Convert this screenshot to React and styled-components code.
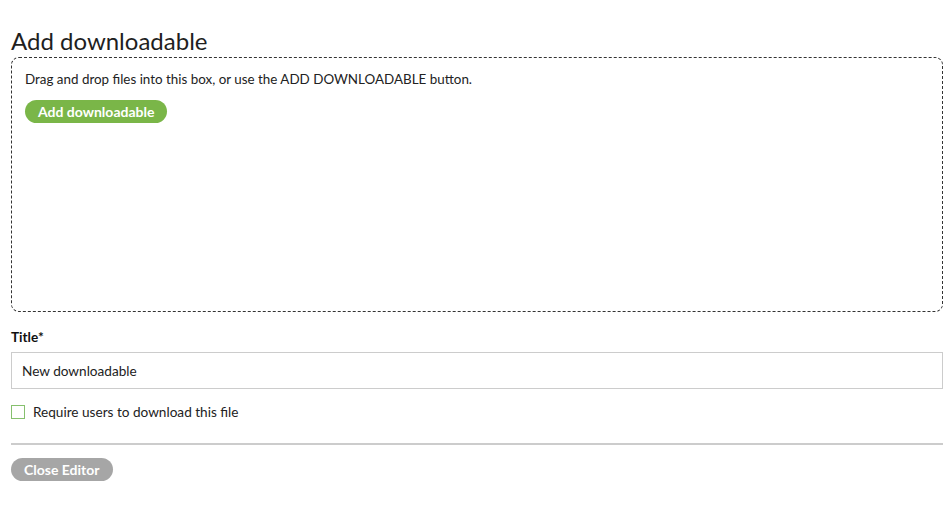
import React from 'react';
import styled, { createGlobalStyle } from 'styled-components';

const GlobalStyle = createGlobalStyle`
  body {
    margin: 0;
    background: #fff;
    font-family: Lato, "Open Sans", sans-serif;
    color: #222;
  }
`;

const Page = styled.div`
  padding: 27px 6px 0 11px;
`;

const Heading = styled.h2`
  margin: 0 0 3px;
  font-size: 24px;
  font-weight: 400;
  line-height: 27px;
  color: #1f1f1f;
`;

const DropZone = styled.div`
  height: 255px;
  box-sizing: border-box;
  border: 1px dashed #333;
  border-radius: 8px;
  padding: 13px 13px;
`;

const Hint = styled.p`
  margin: 0 0 12px;
  font-size: 13.4px;
  line-height: 17px;
`;

const Pill = styled.button`
  display: inline-block;
  border: 0;
  border-radius: 12px;
  height: 23px;
  padding: 0 13px;
  font-family: inherit;
  font-size: 14px;
  font-weight: 700;
  color: #fff;
  background: ${(p) => p.$bg};
  cursor: pointer;
`;

const Label = styled.label`
  display: block;
  margin: 17px 0 7px;
  font-size: 13.6px;
  font-weight: 700;
  color: #111;
`;

const Input = styled.input`
  display: block;
  width: 100%;
  height: 37px;
  box-sizing: border-box;
  border: 1px solid #ccc;
  padding: 0 10px;
  font-family: inherit;
  font-size: 13.6px;
  color: #222;
`;

const CheckRow = styled.label`
  display: flex;
  align-items: center;
  gap: 8px;
  margin-top: 15px;
  font-size: 13.6px;
`;

const Box = styled.span`
  width: 14px;
  height: 14px;
  box-sizing: border-box;
  border: 1px solid #86c06e;
`;

const Divider = styled.hr`
  margin: 23px 0 13px;
  border: 0;
  border-top: 2px solid #ccc;
`;

export default function App() {
  return (
    <>
      <GlobalStyle />
      <Page>
        <Heading>Add downloadable</Heading>
        <DropZone>
          <Hint>Drag and drop files into this box, or use the ADD DOWNLOADABLE button.</Hint>
          <Pill $bg="#7ab648">Add downloadable</Pill>
        </DropZone>
        <Label>Title*</Label>
        <Input defaultValue="New downloadable" />
        <CheckRow>
          <Box />
          Require users to download this file
        </CheckRow>
        <Divider />
        <Pill $bg="#a6a6a6">Close Editor</Pill>
      </Page>
    </>
  );
}
